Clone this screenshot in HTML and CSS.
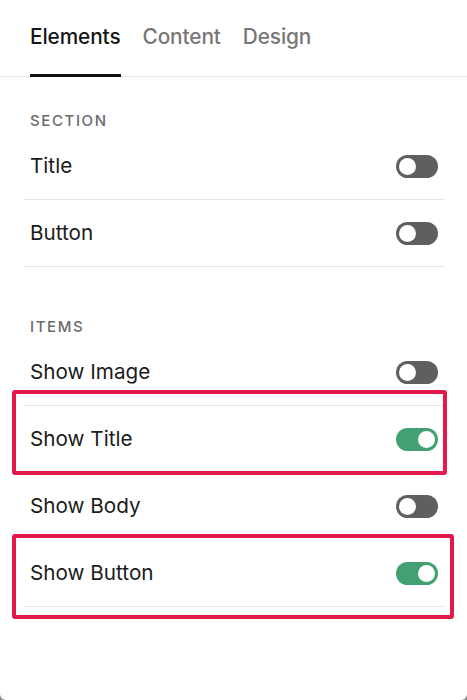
FILE: index.html
```html
<!DOCTYPE html>
<html lang="en">
<head>
<meta charset="utf-8">
<title>Elements panel</title>
<link rel="stylesheet" href="styles.css">
</head>
<body>
<div class="panel">
  <nav class="tabs">
    <div class="tab tab--active">Elements</div>
    <div class="tab">Content</div>
    <div class="tab">Design</div>
  </nav>
  <div class="content">
    <div class="group-label group-label--first">SECTION</div>
    <div class="row"><span class="row-label">Title</span><span class="toggle"></span></div>
    <div class="row"><span class="row-label">Button</span><span class="toggle"></span></div>

    <div class="group-label group-label--items">ITEMS</div>
    <div class="row"><span class="row-label">Show Image</span><span class="toggle"></span></div>
    <div class="row"><span class="row-label">Show Title</span><span class="toggle toggle--on"></span></div>
    <div class="row row--plain"><span class="row-label">Show Body</span><span class="toggle"></span></div>
    <div class="row"><span class="row-label">Show Button</span><span class="toggle toggle--on"></span></div>
  </div>
  <div class="highlight highlight--one"></div>
  <div class="highlight highlight--two"></div>
</div>
</body>
</html>
```

FILE: styles.css
```css
html, body {
  margin: 0;
  padding: 0;
  background: #8a8a8a;
}

body {
  font-family: Inter, "Noto Sans", "Liberation Sans", sans-serif;
  color: #1b1b1b;
}

.panel {
  position: relative;
  width: 467px;
  height: 700px;
  background: #ffffff;
  border-radius: 0 0 6px 6px;
  overflow: hidden;
}

.tabs {
  display: flex;
  gap: 22px;
  padding-left: 30px;
  height: 76px;
  border-bottom: 1px solid #e4e4e4;
}

.tab {
  box-sizing: border-box;
  height: 77px;
  padding-top: 24px;
  font-size: 20.8px;
  line-height: 26px;
  font-weight: 500;
  color: #777777;
  letter-spacing: -0.1px;
}

.tab--active {
  color: #161616;
  border-bottom: 3px solid #111111;
}

.content {
  padding: 0 22px 0 23px;
}

.group-label {
  padding-left: 7px;
  font-size: 15px;
  line-height: 20px;
  font-weight: 500;
  letter-spacing: 1.6px;
  color: #6b6b6b;
  margin-bottom: 2px;
}

.group-label--first {
  margin-top: 34px;
}

.group-label--items {
  margin-top: 50px;
}

.row {
  display: flex;
  align-items: center;
  justify-content: space-between;
  height: 66px;
  padding: 0 7px;
  border-bottom: 1px solid #e6e6e6;
}

.row--plain {
  border-bottom-color: #ffffff;
}

.row-label {
  font-size: 20.7px;
  line-height: 26px;
  color: #1b1b1b;
}

.toggle {
  position: relative;
  width: 42px;
  height: 23px;
  border-radius: 12px;
  background: #5f5f5f;
  flex-shrink: 0;
}

.toggle::after {
  content: "";
  position: absolute;
  top: 3px;
  left: 3px;
  width: 17px;
  height: 17px;
  border-radius: 50%;
  background: #ffffff;
}

.toggle--on {
  background: #43a073;
}

.toggle--on::after {
  left: 22px;
}

.highlight {
  position: absolute;
  left: 12px;
  box-sizing: border-box;
  height: 85px;
  border: 4px solid #e3194b;
  border-radius: 3px;
}

.highlight--one {
  top: 390px;
  width: 435px;
}

.highlight--two {
  top: 534px;
  width: 442px;
}
```
